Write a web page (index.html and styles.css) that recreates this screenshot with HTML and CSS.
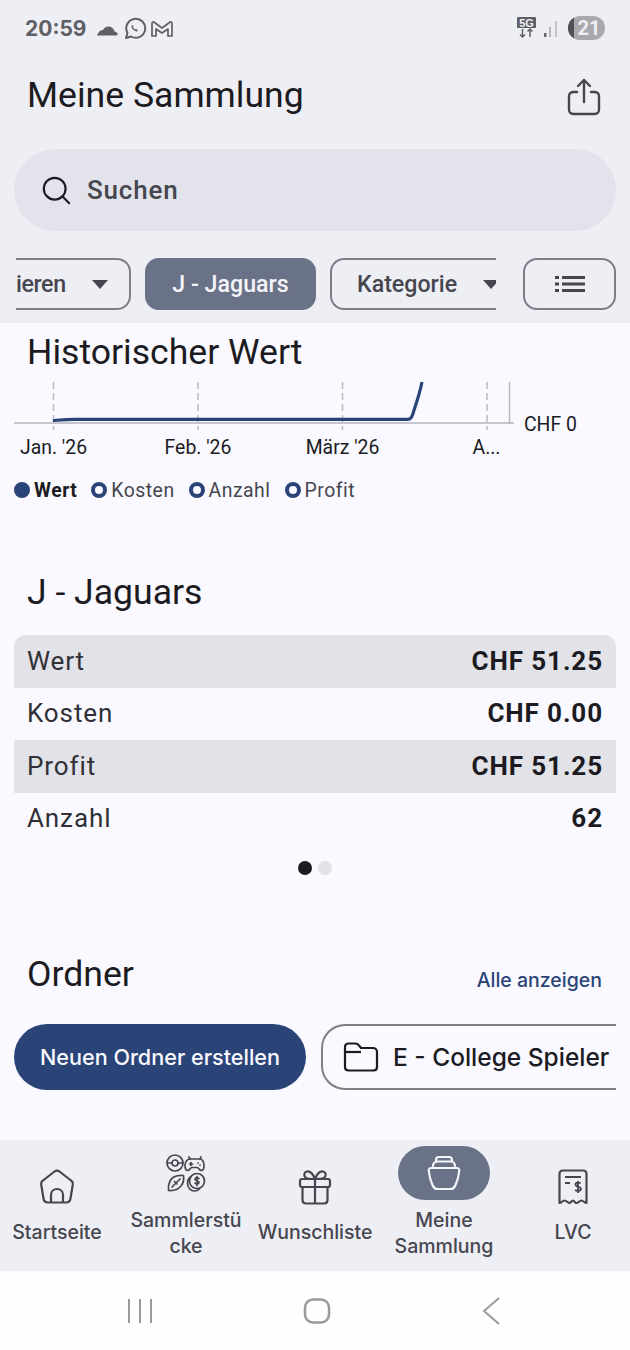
FILE: index.html
```html
<!DOCTYPE html>
<html lang="de">
<head>
    <meta charset="UTF-8">
    <meta name="viewport" content="width=device-width, initial-scale=1.0">
    <title>Meine Sammlung</title>
    <link rel="stylesheet" href="styles.css">
</head>
<body>
    <div class="top">
        <div class="status">
            <span class="time">20:59</span>
            <svg class="status-icons" width="80" height="24" viewBox="0 0 80 24" fill="none" stroke="#5f5f64" stroke-width="2">
                <path d="M1 19.500h19c1.500 0 2-1 1.500-2-.6-1.300-1.800-2-3-2-.6-3-3-5-6-5-2.500 0-4.500 1.500-5.500 3.500-2.500 0-4.500 1.500-6 5.500z" fill="#5f5f64" stroke="none"/>
                <path d="M30 22l1.500-5a9.500 9.500 0 1 1 3.500 3.500z" stroke-linejoin="round"/>
                <path d="M36 9c-1 1-.5 3 1 4.500s3.500 2.500 5 1.500l-1.500-2-1.500.5-2-2 .5-1.500z" fill="#5f5f64" stroke="none"/>
                <path d="M56 20V7.500c0-1.500 1.500-2 2.500-1L66 12l7.500-5.500c1-1 2.500-.5 2.500 1V20h-4v-7l-6 4-6-4v7z" stroke-linejoin="round" stroke-width="1.700"/>
            </svg>
            <span class="spacer"></span>
            <svg class="net" width="43" height="24" viewBox="0 0 43 24">
                <rect x="0" y="1" width="19" height="11" rx="1" fill="#5f5f64"/>
                <text class="net-label" x="9.500" y="10.500" text-anchor="middle">5G</text>
                <path d="M5.500 13v8M3 18.500L5.500 21 8 18.500M13 21v-8M10.500 15.500L13 13l2.500 2.500" fill="none" stroke="#5f5f64" stroke-width="1.500"/>
                <rect x="27" y="17" width="2.500" height="4" fill="#6a6a6e"/>
                <rect x="32" y="11" width="2" height="10" fill="#b5b5ba"/>
                <rect x="38" y="5" width="2" height="16" fill="#c4c4c8"/>
            </svg>
            <div class="battery"><span class="battery-end"></span><span class="battery-num">21</span></div>
        </div>

        <div class="titlebar">
            <h1 class="title">Meine Sammlung</h1>
            <svg class="share" width="36" height="38" viewBox="0 0 36 38" fill="none" stroke="#46464f" stroke-width="2.400" stroke-linecap="round" stroke-linejoin="round">
                <path d="M11 14H7.500C5.500 14 3 15.500 3 18v14c0 2.500 2.500 4 4.500 4h21c2 0 4.500-1.500 4.500-4V18c0-2.500-2.500-4-4.500-4H25"/>
                <path d="M18 24V2M12 8l6-6 6 6"/>
            </svg>
        </div>

        <div class="search">
            <svg width="29" height="29" viewBox="0 0 32 32" fill="none" stroke="#1b1b21" stroke-width="2.400" stroke-linecap="round">
                <circle cx="14" cy="14" r="12"/>
                <path d="M23 23l7 7"/>
            </svg>
            <span>Suchen</span>
        </div>

        <div class="chips">
            <div class="chip-scroll">
                <div class="chip chip-first">ieren<i class="caret"></i></div>
                <div class="chip chip-on">J - Jaguars</div>
                <div class="chip chip-cut">Kategorie<i class="caret"></i></div>
            </div>
            <div class="chip chip-list">
                <svg width="30" height="18" viewBox="0 0 30 18" fill="#46464f">
                    <rect x="0" y="1" width="4" height="3"/><rect x="7" y="1" width="23" height="3"/>
                    <rect x="0" y="7.500" width="4" height="3"/><rect x="7" y="7.500" width="23" height="3"/>
                    <rect x="0" y="14" width="4" height="3"/><rect x="7" y="14" width="23" height="3"/>
                </svg>
            </div>
        </div>
    </div>

    <div class="main">
        <h2 class="heading heading-first">Historischer Wert</h2>
        <svg class="chart" width="630" height="100" viewBox="0 375 630 100">
            <g stroke="#b9bac2" stroke-width="1.500" stroke-dasharray="7 4">
                <path d="M53.500 382v48M198 382v48M342.500 382v48M487 382v48"/>
            </g>
            <path d="M14 423h500" stroke="#c5c6ce" stroke-width="2"/>
            <path d="M509.500 382v42" stroke="#b9bac2" stroke-width="1.500"/>
            <path d="M53 420.500C60 420 65 419.500 75 419.300H408c3 0 4-2 6-9 3-9 6-18 8-28.300" fill="none" stroke="#2a4478" stroke-width="3.200"/>
            <g class="axis">
                <text x="53.500" y="454" text-anchor="middle">Jan. '26</text>
                <text x="198" y="454" text-anchor="middle">Feb. '26</text>
                <text x="342.500" y="454" text-anchor="middle">März '26</text>
                <text x="486.500" y="454" text-anchor="middle">A...</text>
                <text x="524" y="431">CHF 0</text>
            </g>
        </svg>
        <div class="legend">
            <span class="legend-item legend-on"><i class="dot dot-full"></i>Wert</span>
            <span class="legend-item"><i class="dot"></i>Kosten</span>
            <span class="legend-item"><i class="dot"></i>Anzahl</span>
            <span class="legend-item"><i class="dot"></i>Profit</span>
        </div>

        <h2 class="heading heading-jaguars">J - Jaguars</h2>
        <div class="stats">
            <div class="stat stat-alt"><span>Wert</span><b>CHF 51.25</b></div>
            <div class="stat stat-plain"><span>Kosten</span><b>CHF 0.00</b></div>
            <div class="stat stat-alt"><span>Profit</span><b>CHF 51.25</b></div>
            <div class="stat stat-plain"><span>Anzahl</span><b>62</b></div>
        </div>
        <div class="pager"><i class="pager-on"></i><i></i></div>

        <div class="folder-head">
            <h2 class="heading">Ordner</h2>
            <a class="show-all">Alle anzeigen</a>
        </div>
        <div class="folders">
            <div class="new-folder">Neuen Ordner erstellen</div>
            <div class="folder">
                <svg width="36" height="32" viewBox="0 0 36 32" fill="none" stroke="#1b1b21" stroke-width="2.200" stroke-linejoin="round">
                    <path d="M2 6c0-2 1.500-3.500 3.500-3.500h7c1.500 0 2.500.5 3.500 2l2 2.500h12c2 0 4 1.500 4 4V26c0 2-1.500 3.500-3.500 3.500h-25C3.500 29.500 2 28 2 26z"/>
                    <path d="M2 11h16"/>
                </svg>
                <span>E - College Spieler</span>
            </div>
        </div>
    </div>

    <div class="nav">
        <div class="nav-item nav-one">
            <div class="nav-icon">
                <svg width="36" height="36" viewBox="0 0 36 36" fill="none" stroke="#46464f" stroke-width="2.200" stroke-linejoin="round">
                    <path d="M15.500 2.500c1.500-1 3.500-1 5 0l11.500 9c1.500 1 2 2.500 1.800 4l-2.300 14c-.4 2.500-2 4-4.500 4h-18c-2.500 0-4.100-1.500-4.500-4L2.200 15.500c-.2-1.500.3-3 1.800-4z"/>
                    <path d="M12 33.500V26c0-3.500 2.500-6 6-6s6 2.500 6 6v7.500"/>
                </svg>
            </div>
            <span class="nav-label">Startseite</span>
        </div>
        <div class="nav-item">
            <div class="nav-icon">
                <svg width="40" height="40" viewBox="0 0 40 40" fill="none" stroke="#46464f" stroke-width="1.700" stroke-linecap="round" stroke-linejoin="round">
                    <circle cx="9" cy="10" r="8"/>
                    <path d="M1 10h5M12 10h5"/>
                    <circle cx="9" cy="10" r="3"/>
                    <path d="M24 6l-1-2M34 6l1-2"/>
                    <path d="M24 6h10c2 0 4 2.500 4 6 0 3-1 5.500-2.500 5.500-2.500 0-2.500-3-4.500-3h-5c-2 0-2 3-4.500 3-1.500 0-2.500-2.500-2.500-5.500 0-3.500 2.500-6 5-6z"/>
                    <path d="M25 9.500v3M23.500 11h3M32 10h.1M34 12h.1"/>
                    <path d="M17.500 22.500C11 22 6 24 4 28 2.500 31 2 34 2.500 37.500 7 38 12 36.500 15 33 17.500 30 18 26 17.500 22.500z"/>
                    <path d="M6 34L14 26M8.500 28.500l2.500 2.500"/>
                    <path d="M24.500 24c-2 1.500-3 3.500-3 6 0 4.500 3 8 7 8 2 0 3.500-.5 5-2"/>
                    <circle cx="31" cy="28" r="7.500"/>
                    <path d="M33 25.500c-1-1-4-1-4 .7 0 2 4 1.200 4 3.300 0 1.800-3 1.700-4 .7M31 23.500v9"/>
                </svg>
            </div>
            <span class="nav-label">Sammlerstü<br>cke</span>
        </div>
        <div class="nav-item nav-one">
            <div class="nav-icon">
                <svg width="34" height="36" viewBox="0 0 34 36" fill="none" stroke="#46464f" stroke-width="2.200" stroke-linejoin="round">
                    <path d="M17 10c-2-5-5-8-8-7.500C6 3 5.500 6.500 7.500 8.500 9 10 13 10 17 10zM17 10c2-5 5-8 8-7.500 3 .5 3.500 4 1.500 6C25 10 21 10 17 10z"/>
                    <rect x="2" y="10" width="30" height="8" rx="2"/>
                    <path d="M4.500 18v13c0 2 1.500 3.500 3.500 3.500h18c2 0 3.500-1.500 3.500-3.500V18M17 10v24.500"/>
                </svg>
            </div>
            <span class="nav-label">Wunschliste</span>
        </div>
        <div class="nav-item">
            <div class="nav-icon nav-pill">
                <svg width="34" height="36" viewBox="0 0 34 36" fill="none" stroke="#f4f4fa" stroke-width="2.200" stroke-linejoin="round" stroke-linecap="round">
                    <path d="M9 6V5c0-2 1-3 3-3h10c2 0 3 1 3 3v1"/>
                    <path d="M6 11c0-2.500 2-4.500 4.500-4.500h13c2.500 0 4.500 2 4.500 4.500"/>
                    <path d="M4 13h26c1.500 0 2.500 1 2.300 2.500-.5 5-2 11-4 15-1 2.500-2.500 3.500-4.800 3.500h-13c-2.300 0-3.800-1-4.800-3.500-2-4-3.500-10-4-15C1.500 14 2.500 13 4 13z"/>
                </svg>
            </div>
            <span class="nav-label">Meine<br>Sammlung</span>
        </div>
        <div class="nav-item nav-one">
            <div class="nav-icon">
                <svg width="30" height="36" viewBox="0 0 30 36" fill="none" stroke="#46464f" stroke-width="2.200" stroke-linejoin="round">
                    <path d="M1.500 34V5c0-2 1.500-3.500 3.500-3.500h20c2 0 3.500 1.500 3.500 3.500v29c-2 0-3-2.500-5-2.500s-3 2.500-5 2.500-2-2.500-3.500-2.500-2 2.500-3.500 2.500-3-2.500-5-2.500-3 2.500-5 2.500z"/>
                    <path d="M7 8h16M7 14h5"/>
                    <path d="M22.500 14.500c-1-1.200-5-1.200-5 1 0 2.800 5.500 1.700 5.500 4.500 0 2.300-4.500 2.200-6 1M20 12v12" stroke-width="1.800"/>
                </svg>
            </div>
            <span class="nav-label">LVC</span>
        </div>
    </div>

    <div class="sysnav">
        <svg width="26" height="26" viewBox="0 0 26 26" stroke="#9a9a9c" stroke-width="2"><path d="M2 1v24M13 1v24M24 1v24"/></svg>
        <svg width="28" height="26" viewBox="0 0 28 26" fill="none" stroke="#9a9a9c" stroke-width="2.500"><rect x="2" y="1.500" width="24" height="23" rx="8"/></svg>
        <svg width="20" height="28" viewBox="0 0 20 28" fill="none" stroke="#9a9a9c" stroke-width="2"><path d="M18 1L3 14l15 13"/></svg>
    </div>
</body>
</html>
```

FILE: styles.css
```css
html{
    background-color: #fefefe;
}
body{
    margin: 0;
    width: 630px;
    height: 1350px;
    overflow: hidden;
    font-family: Roboto, sans-serif;
    color: #1b1b21;
}

/* top area */
.top{
    height: 323px;
    background-color: #eeeef5;
}
.status{
    display: flex;
    align-items: center;
    height: 56px;
    padding: 0 25px;
    box-sizing: border-box;
}
.time{
    font-family: Inter, sans-serif;
    font-size: 21px;
    font-weight: 700;
    color: #5f5f64;
}
.status-icons{
    margin-left: 10px;
}
.spacer{
    flex: 1;
}
.net{
    margin-right: 8px;
}
.net-label{
    font-family: "Liberation Sans", sans-serif;
    font-size: 11px;
    font-weight: 700;
    fill: #eeeef5;
}
.battery{
    position: relative;
    width: 37px;
    height: 24px;
    border-radius: 12px;
    background-color: #a9a9ad;
    overflow: hidden;
    text-align: center;
}
.battery-end{
    position: absolute;
    left: 0;
    top: 0;
    width: 6px;
    height: 24px;
    background-color: #505055;
}
.battery-num{
    position: relative;
    font-size: 20px;
    font-weight: 700;
    line-height: 24px;
    color: #eeeef5;
    margin-left: 5px;
}
.titlebar{
    display: flex;
    align-items: center;
    justify-content: space-between;
    height: 78px;
    padding: 0 28px 0 27px;
}
.title{
    margin: 0;
    font-size: 35.600px;
    font-weight: 400;
}
.share{
    margin-top: 4px;
}
.search{
    display: flex;
    align-items: center;
    gap: 16px;
    height: 82px;
    margin: 15px 14px 0;
    padding-left: 28px;
    border-radius: 41px;
    background-color: #e3e3ec;
    font-size: 26px;
    font-weight: 500;
    letter-spacing: 0.8px;
    color: #46464f;
}

/* chips */
.chips{
    display: flex;
    justify-content: space-between;
    margin: 27px 14px 0 16px;
}
.chip-scroll{
    display: flex;
    gap: 14px;
    width: 480px;
    overflow: hidden;
}
.chip{
    display: flex;
    align-items: center;
    justify-content: center;
    flex: none;
    height: 52px;
    box-sizing: border-box;
    border: 2px solid #7e7e88;
    border-radius: 14px;
    font-size: 23.200px;
    font-weight: 500;
    color: #46464f;
}
.chip-first{
    justify-content: flex-start;
    width: 115px;
    border-left: none;
    border-top-left-radius: 0;
    border-bottom-left-radius: 0;
    letter-spacing: -0.4px;
}
.chip-on{
    width: 171px;
    border: none;
    background-color: #6a7288;
    color: #f4f4fa;
}
.chip-cut{
    justify-content: flex-start;
    width: 166px;
    border-right: none;
    border-top-right-radius: 0;
    border-bottom-right-radius: 0;
    padding-left: 25px;
}
.chip-list{
    width: 93px;
}
.caret{
    width: 0;
    height: 0;
    margin-left: 26px;
    border-left: 8px solid transparent;
    border-right: 8px solid transparent;
    border-top: 9px solid #46464f;
}

/* main content */
.main{
    height: 817px;
    background-color: #f9f9ff;
    overflow: hidden;
}
.heading{
    margin: 0;
    padding-left: 27px;
    height: 46px;
    line-height: 46px;
    font-size: 35.600px;
    font-weight: 400;
}
.heading-first{
    margin-top: 6px;
}
.chart{
    display: block;
}
.axis{
    font-family: Roboto, sans-serif;
    font-size: 19.400px;
    fill: #1b1b21;
}
.legend{
    display: flex;
    align-items: center;
    gap: 14px;
    height: 24px;
    margin-top: 3px;
    padding-left: 14px;
    font-size: 19.400px;
    letter-spacing: 0.5px;
    color: #46464f;
}
.legend-item{
    display: flex;
    align-items: center;
    gap: 4px;
}
.legend-on{
    font-weight: 700;
    color: #1b1b21;
}
.dot{
    width: 16px;
    height: 16px;
    box-sizing: border-box;
    border: 4px solid #2a4478;
    border-radius: 50%;
}
.dot-full{
    background-color: #2a4478;
}
.heading-jaguars{
    margin-top: 67px;
}
.stats{
    margin: 20px 14px 0;
    border-radius: 12px 12px 0 0;
    overflow: hidden;
}
.stat{
    display: flex;
    align-items: center;
    justify-content: space-between;
    height: 52.500px;
    box-sizing: border-box;
    padding: 0 13px 0 13px;
    font-size: 26px;
    letter-spacing: 0.9px;
    color: #303036;
}
.stat b{
    color: #1b1b21;
}
.stat-alt{
    background-color: #e2e2e9;
}
.stat-plain{
    padding-bottom: 1px;
}
.pager{
    display: flex;
    justify-content: center;
    gap: 6px;
    margin-top: 16px;
}
.pager i{
    width: 14px;
    height: 14px;
    border-radius: 50%;
    background-color: #e2e2e9;
}
.pager .pager-on{
    background-color: #1b1b21;
}
.folder-head{
    display: flex;
    justify-content: space-between;
    align-items: center;
    margin-top: 76px;
    padding-right: 28px;
}
.show-all{
    margin-top: 11px;
    font-family: Inter, sans-serif;
    font-size: 19.500px;
    font-weight: 500;
    color: #2a4478;
}
.folders{
    display: flex;
    gap: 15px;
    margin: 27px 14px 0;
    overflow: hidden;
}
.new-folder{
    flex: none;
    width: 292px;
    height: 66px;
    line-height: 66px;
    text-align: center;
    border-radius: 33px;
    background-color: #2a4478;
    color: #f9f9ff;
    font-family: Inter, sans-serif;
    font-size: 21.600px;
    font-weight: 500;
}
.folder{
    display: flex;
    align-items: center;
    gap: 14px;
    flex: none;
    width: 295px;
    height: 66px;
    box-sizing: border-box;
    padding-left: 20px;
    border: 2px solid #7e7e88;
    border-right: none;
    border-radius: 24px 0 0 24px;
    font-family: Inter, sans-serif;
    font-size: 24.500px;
    font-weight: 500;
    white-space: nowrap;
}

/* bottom nav */
.nav{
    display: flex;
    justify-content: center;
    height: 131px;
    background-color: #eeeef5;
}
.nav-item{
    flex: none;
    width: 129px;
    display: flex;
    flex-direction: column;
    align-items: center;
    padding-top: 6px;
    box-sizing: border-box;
}
.nav-one{
    padding-top: 26px;
}
.nav-icon{
    display: flex;
    align-items: center;
    justify-content: center;
    width: 92px;
    height: 54px;
    border-radius: 27px;
}
.nav-one .nav-icon{
    height: 42px;
}
.nav-pill{
    background-color: #6a7288;
}
.nav-label{
    margin-top: 7px;
    font-family: Inter, sans-serif;
    font-size: 19.500px;
    font-weight: 500;
    line-height: 26px;
    text-align: center;
    color: #46464f;
    white-space: nowrap;
}
.nav-one .nav-label{
    margin-top: 11px;
}

/* android buttons */
.sysnav{
    display: flex;
    align-items: center;
    gap: 150px;
    height: 79px;
    padding-left: 127px;
    background-color: #fefefe;
}
```
